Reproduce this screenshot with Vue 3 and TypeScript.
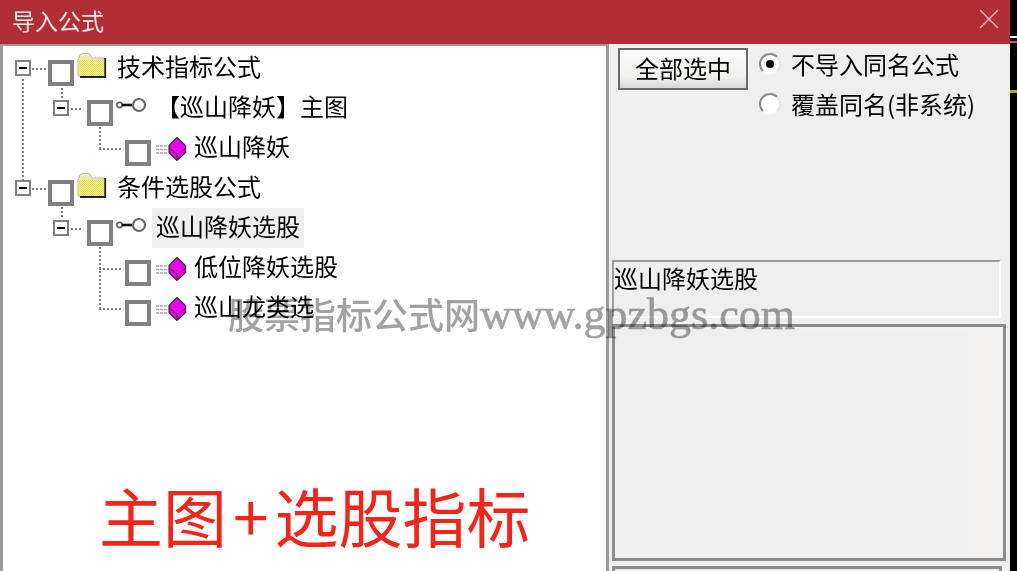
<script setup lang="ts">
interface TreeRow {
  level: number
  icon: 'folder' | 'key' | 'gem'
  label: string
  selected?: boolean
}

interface Connector {
  x: number
  y: number
  len: number
  dir: 'h' | 'v'
}

const rows: TreeRow[] = [
  { level: 0, icon: 'folder', label: '技术指标公式' },
  { level: 1, icon: 'key', label: '【巡山降妖】主图' },
  { level: 2, icon: 'gem', label: '巡山降妖' },
  { level: 0, icon: 'folder', label: '条件选股公式' },
  { level: 1, icon: 'key', label: '巡山降妖选股', selected: true },
  { level: 2, icon: 'gem', label: '低位降妖选股' },
  { level: 2, icon: 'gem', label: '巡山龙类选' },
]

// coordinates relative to the tree panel
const connectors: Connector[] = [
  { x: 19, y: 33, len: 101, dir: 'v' },
  { x: 29, y: 22, len: 14, dir: 'h' },
  { x: 29, y: 142, len: 14, dir: 'h' },
  { x: 58, y: 42, len: 10, dir: 'v' },
  { x: 68, y: 62, len: 12, dir: 'h' },
  { x: 96, y: 81, len: 22, dir: 'v' },
  { x: 96, y: 102, len: 22, dir: 'h' },
  { x: 58, y: 161, len: 10, dir: 'v' },
  { x: 68, y: 182, len: 12, dir: 'h' },
  { x: 96, y: 201, len: 61, dir: 'v' },
  { x: 96, y: 222, len: 22, dir: 'h' },
  { x: 96, y: 262, len: 22, dir: 'h' },
]

function lineStyle(c: Connector) {
  return {
    left: c.x + 'px',
    top: c.y + 'px',
    width: c.dir === 'h' ? c.len + 'px' : '2px',
    height: c.dir === 'v' ? c.len + 'px' : '2px',
  }
}
</script>

<template>
  <div class="screen">
    <div class="window">
      <header class="titlebar">
        <span class="title">导入公式</span>
        <svg class="close" width="20" height="20" viewBox="0 0 20 20">
          <path d="M1 1L19 19M19 1L1 19" stroke="#e6c4c4" stroke-width="1.3" fill="none" />
        </svg>
      </header>

      <div class="body">
        <div class="tree">
          <i
            v-for="(c, i) in connectors"
            :key="i"
            class="line"
            :class="c.dir"
            :style="lineStyle(c)"
          ></i>

          <div v-for="row in rows" :key="row.label" class="row" :class="'level-' + row.level">
            <span v-if="row.level < 2" class="expander"><b></b></span>
            <span class="check"></span>

            <svg v-if="row.icon === 'folder'" class="ico-folder" width="30" height="25" viewBox="0 0 30 25">
              <defs>
                <pattern id="dither" width="2" height="2" patternUnits="userSpaceOnUse">
                  <rect width="2" height="2" fill="#f6f49a" />
                  <rect width="1" height="1" fill="#e2de50" />
                  <rect x="1" y="1" width="1" height="1" fill="#e2de50" />
                </pattern>
              </defs>
              <path d="M1 7L3 2Q4 .5 6 .5H11Q13 .5 14 3L15 5H27V23H1Z" fill="#eeecb4" stroke="#bcbaa0" stroke-width="1" />
              <rect x="2" y="7" width="25" height="16" fill="url(#dither)" />
              <path d="M28.2 5V24H3" stroke="#222" stroke-width="1.8" fill="none" />
            </svg>

            <svg v-else-if="row.icon === 'key'" class="ico-key" width="30" height="16" viewBox="0 0 30 16">
              <circle cx="3.5" cy="8" r="2.6" fill="#fff" stroke="#666" stroke-width="1.8" />
              <path d="M6 8H16" stroke="#111" stroke-width="2.6" />
              <circle cx="23" cy="8" r="6" fill="#fff" stroke="#666" stroke-width="2.2" />
            </svg>

            <svg v-else class="ico-gem" width="31" height="24" viewBox="0 0 31 24">
              <path d="M0 9H11M0 12.5H12M0 16H11" stroke="#a8a8a8" stroke-width="1.4" stroke-dasharray="3 1" />
              <path d="M21 0.5L29.5 8.5V15.5L21 23.5L13 15.5V8.5Z" fill="#f000f0" stroke="#333" stroke-width="1.2" />
              <path d="M14 12L21 17L29 12M21 17V23" stroke="#7a007a" stroke-width="1.2" fill="none" />
            </svg>

            <span class="label" :class="{ selected: row.selected }">{{ row.label }}</span>
          </div>
        </div>

        <aside class="side">
          <div class="controls">
            <button class="select-all" type="button">全部选中</button>
            <div class="options">
              <label class="opt"><span class="radio on"></span>不导入同名公式</label>
              <label class="opt"><span class="radio"></span>覆盖同名(非系统)</label>
            </div>
          </div>

          <div class="name-box">巡山降妖选股</div>
          <div class="desc-box"><div class="desc-fill"></div></div>
          <div class="next-box"></div>
        </aside>
      </div>
    </div>

    <div class="backdrop">
      <i class="mark-white"></i>
      <i class="mark-red"></i>
      <i class="mark-yellow"></i>
    </div>

    <div class="watermark">股票指标公式网<span class="wm-latin">www.gpzbgs.com</span></div>
    <div class="promo">主图<span class="plus">+</span>选股指标</div>
  </div>
</template>

<style scoped>
.screen {
  position: relative;
  width: 1017px;
  height: 571px;
  display: flex;
  overflow: hidden;
  background: #000;
  font-family: "Noto Sans CJK SC", "Liberation Sans", sans-serif;
  color: #000;
}

.window {
  width: 1010px;
  display: flex;
  flex-direction: column;
}

.titlebar {
  height: 44px;
  flex: none;
  background: #b12f34;
  display: flex;
  align-items: center;
  justify-content: space-between;
  padding: 0 11px 0 12px;
  box-sizing: border-box;
}

.title {
  color: #f6e9e9;
  font-size: 23px;
  line-height: 44px;
  margin-top: -4px;
}

.close {
  margin-top: -6px;
}

.body {
  flex: 1;
  display: flex;
  min-height: 0;
}

.tree {
  position: relative;
  width: 603px;
  box-sizing: content-box;
  background: #fff;
  border-left: 3px solid #9a9a9a;
  border-top: 2px solid #9a9a9a;
  padding-top: 1px;
}

.line {
  position: absolute;
}

.line.h {
  background: repeating-linear-gradient(90deg, #808080 0 2px, transparent 2px 4px);
}

.line.v {
  background: repeating-linear-gradient(180deg, #808080 0 2px, transparent 2px 4px);
}

.row {
  height: 40px;
  display: flex;
  align-items: center;
}

.level-0 {
  padding-left: 12px;
}

.level-1 {
  padding-left: 50px;
}

.level-2 {
  padding-left: 122px;
}

.expander {
  width: 16px;
  height: 16px;
  flex: none;
  box-sizing: border-box;
  border: 2px solid #808080;
  background: #fff;
  margin: 2px 17px 0 0;
  display: flex;
  align-items: center;
  justify-content: center;
}

.expander b {
  width: 8px;
  height: 2px;
  background: #000;
}

.check {
  width: 26px;
  height: 26px;
  flex: none;
  box-sizing: border-box;
  border: 4px solid #808080;
  background: #fff;
  margin-top: 12px;
}

.level-1 .expander {
  margin-right: 18px;
}

.ico-folder {
  margin: -4px 0 0 3px;
  flex: none;
}

.ico-key {
  margin: -5px 0 0 3px;
  flex: none;
}

.ico-gem {
  margin: 4px 0 0 5px;
  flex: none;
}

.label {
  font-size: 24px;
  line-height: 40px;
  white-space: nowrap;
  padding: 0 4px;
  height: 40px;
  box-sizing: border-box;
}

.label.selected {
  background: #efefef;
}

.level-0 .label {
  margin: -2px 0 0 6px;
}

.level-1 .label {
  margin: 1px 0 0 6px;
  line-height: 36px;
}

.level-2 .label {
  margin: -2px 0 0 3px;
}

.side {
  flex: 1;
  min-width: 0;
  background: #efefef;
  border-left: 3px solid #9a9a9a;
  box-sizing: border-box;
  padding-left: 3px;
  display: flex;
  flex-direction: column;
}

.controls {
  height: 216px;
  flex: none;
  display: flex;
  align-items: flex-start;
  padding: 4px 0 0 6px;
  box-sizing: border-box;
}

.select-all {
  width: 130px;
  height: 42px;
  box-sizing: border-box;
  border: 2px solid #6a6a6a;
  background: linear-gradient(#fafafa, #f0f0ee 70%, #d8d8d6);
  font: inherit;
  font-size: 24px;
  line-height: 36px;
  padding: 0 0 2px;
  color: #000;
}

.options {
  display: flex;
  flex-direction: column;
  margin: -5px 0 0 11px;
}

.opt {
  height: 40px;
  display: flex;
  align-items: center;
  font-size: 24px;
  white-space: nowrap;
}

.radio {
  position: relative;
  width: 22px;
  height: 22px;
  box-sizing: border-box;
  border-radius: 50%;
  background: #fff;
  border: 2px solid;
  border-color: #8a8a8a #e4e4e4 #f6f6f6 #8a8a8a;
  margin: 2px 10px 0 0;
  flex: none;
}

.radio.on::after {
  content: "";
  position: absolute;
  left: 5px;
  top: 5px;
  width: 8px;
  height: 8px;
  border-radius: 50%;
  background: #000;
}

.name-box {
  width: 389px;
  height: 58px;
  flex: none;
  box-sizing: border-box;
  border: 2px solid;
  border-color: #9c9c9c #fff #fff #9c9c9c;
  font-size: 24px;
  line-height: 31px;
  padding-left: 0;
}

.desc-box {
  width: 394px;
  height: 237px;
  flex: none;
  margin-top: 6px;
  box-sizing: border-box;
  border: 3px solid #8c8c8c;
  background: #f3f2f0;
  padding: 2px 2px 6px 0;
}

.desc-fill {
  width: 353px;
  height: 100%;
  background: #efefef;
}

.next-box {
  width: 390px;
  flex: 1;
  margin-top: 5px;
  box-sizing: border-box;
  border: 3px solid #8c8c8c;
  border-bottom: 0;
}

.backdrop {
  position: relative;
  flex: 1;
  background: #000;
}

.mark-white {
  position: absolute;
  left: 0;
  top: 36px;
  width: 7px;
  height: 2px;
  background: #eee;
  box-shadow: 0 5px 0 #c06060;
}

.mark-red {
  position: absolute;
  left: 4px;
  top: 54px;
  width: 1px;
  height: 1px;
  background: #a03040;
}

.mark-yellow {
  position: absolute;
  left: 0;
  top: 90px;
  width: 7px;
  height: 3px;
  background: #a8a820;
}

.watermark {
  position: absolute;
  left: 228px;
  top: 288px;
  font-size: 36px;
  font-weight: 500;
  line-height: 50px;
  white-space: nowrap;
  color: #a2a2a2;
  mix-blend-mode: multiply;
  pointer-events: none;
}

.wm-latin {
  font-family: "Liberation Serif", serif;
  font-size: 44px;
  font-weight: 400;
  -webkit-text-stroke: 0.6px #a2a2a2;
}

.promo {
  position: absolute;
  left: 99px;
  top: 468px;
  font-size: 64px;
  line-height: 92px;
  color: #f0261c;
  white-space: nowrap;
}

.plus {
  padding: 0 6px;
}
</style>

<style>
html,
body {
  margin: 0;
  background: #000;
}
</style>
